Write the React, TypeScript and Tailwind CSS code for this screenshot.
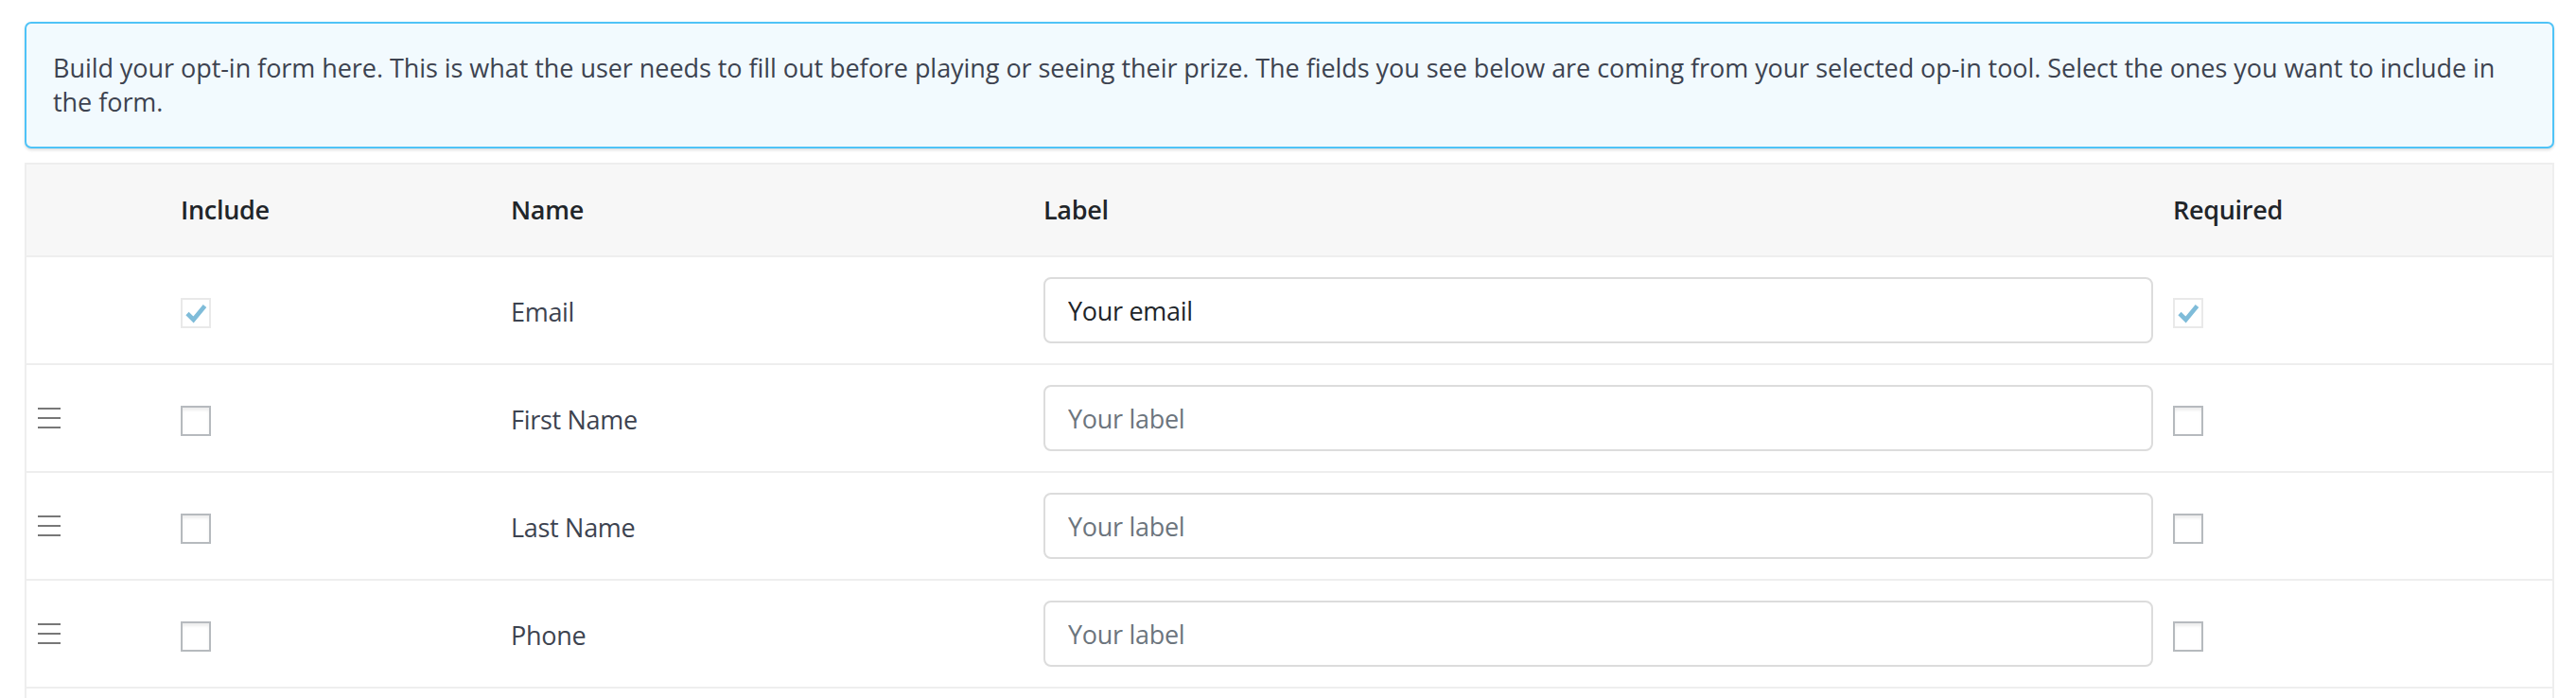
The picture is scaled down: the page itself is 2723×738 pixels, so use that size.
import React, { useState } from "react";

type Field = {
  id: string;
  name: string;
  label: string;
  include: boolean;
  required: boolean;
  locked?: boolean;
};

const initialFields: Field[] = [
  { id: "email", name: "Email", label: "Your email", include: true, required: true, locked: true },
  { id: "first", name: "First Name", label: "", include: false, required: false },
  { id: "last", name: "Last Name", label: "", include: false, required: false },
  { id: "phone", name: "Phone", label: "", include: false, required: false },
];

const CheckBox = ({
  checked,
  disabled,
  onChange,
}: {
  checked: boolean;
  disabled?: boolean;
  onChange?: () => void;
}) => (
  <button
    type="button"
    onClick={disabled ? undefined : onChange}
    className={
      checked
        ? "mt-[6px] flex h-[32px] w-[32px] items-center justify-center border-2 border-[#e9e9e9] bg-white"
        : "mt-[6px] flex h-[32px] w-[32px] items-center justify-center border-2 border-[#b6babe] bg-white shadow-[inset_0_3px_3px_rgba(0,0,0,0.07)]"
    }
  >
    {checked && (
      <svg width="24" height="22" viewBox="0 0 24 22">
        <path d="M3 11.5 L9.5 18 L21.5 3.5" fill="none" stroke="#7fbcd9" strokeWidth="4.6" />
      </svg>
    )}
  </button>
);

const DragHandle = () => (
  <div className="flex w-[24px] flex-col gap-[8px]">
    <div className="h-[2px] bg-[#777]" />
    <div className="h-[2px] bg-[#777]" />
    <div className="h-[2px] bg-[#777]" />
  </div>
);

const row = "grid grid-cols-[151px_349px_563px_1194px_1fr] items-center";

export default function App() {
  const [fields, setFields] = useState<Field[]>(initialFields);

  const update = (id: string, patch: Partial<Field>) =>
    setFields(fields.map((f) => (f.id === id ? { ...f, ...patch } : f)));

  return (
    <div className="min-h-screen bg-white pl-[26px] pr-[23px] pt-[23px] font-['Open_Sans',sans-serif]">
      <div className="rounded-[7px] border-2 border-[#4fc3f7] bg-[#f2fafe] py-[29px] pl-[28px] pr-[56px] text-[27px] leading-[36px] tracking-[-0.05px] text-[#3d4350] shadow-[0_2px_3px_rgba(0,0,0,0.12)]">
        Build your opt-in form here. This is what the user needs to fill out before playing or seeing their prize. The fields you see below are coming from your selected op-in tool. Select the ones you want to include in the form.
      </div>

      <div className="mt-[15px] border-2 border-b-0 border-[#eeeeee] text-[27px] tracking-[-0.3px]">
        <div className={`${row} h-[98px] border-b-2 border-[#eeeeee] bg-[#f7f7f7] font-semibold text-[#212529]`}>
          <div />
          <div className="pl-[12px]">Include</div>
          <div className="pl-[12px]">Name</div>
          <div className="pl-[12px]">Label</div>
          <div className="pl-[12px]">Required</div>
        </div>

        {fields.map((f) => (
          <div key={f.id} className={`${row} h-[114px] border-b-2 border-[#eeeeee] text-[#3d4350]`}>
            <div className="pl-[12px]">{!f.locked && <DragHandle />}</div>
            <div className="pl-[12px]">
              <CheckBox
                checked={f.include}
                disabled={f.locked}
                onChange={() => update(f.id, { include: !f.include })}
              />
            </div>
            <div className="pl-[12px] pt-[5px]">{f.name}</div>
            <div className="pl-[12px] pr-[9px]">
              <input
                type="text"
                value={f.label}
                placeholder="Your label"
                onChange={(e) => update(f.id, { label: e.target.value })}
                className="h-[70px] w-full rounded-[8px] border-2 border-[#dcdcdc] bg-white px-[24px] text-[27px] tracking-[-0.3px] text-[#212529] outline-none placeholder:text-[#6c757d]"
              />
            </div>
            <div className="pl-[12px]">
              <CheckBox
                checked={f.required}
                disabled={f.locked}
                onChange={() => update(f.id, { required: !f.required })}
              />
            </div>
          </div>
        ))}

        <div className="h-[114px]" />
      </div>
    </div>
  );
}
